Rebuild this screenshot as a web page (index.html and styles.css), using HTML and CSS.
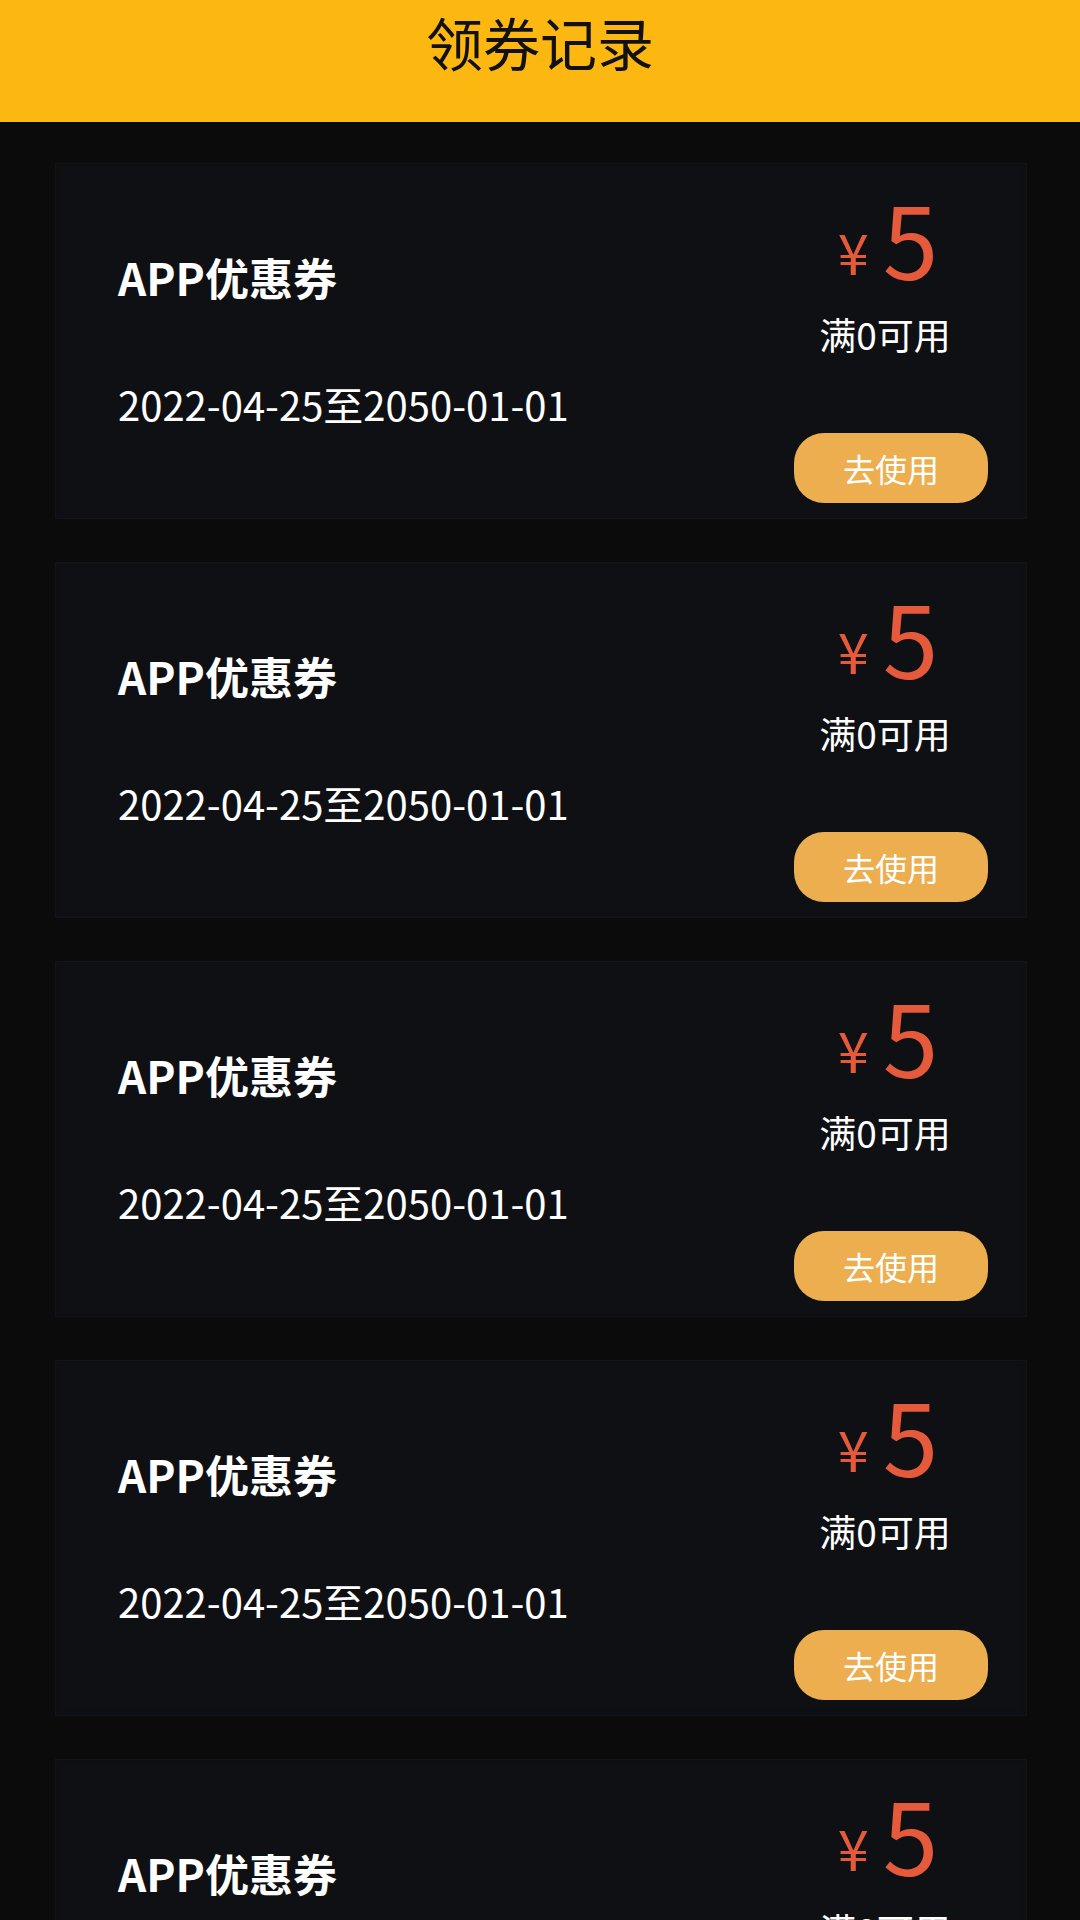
FILE: index.html
```html
<!DOCTYPE html>
<html lang="zh-CN">
<head>
<meta charset="utf-8">
<title>领券记录</title>
<link rel="stylesheet" href="styles.css">
</head>
<body>
<header class="topbar"><h1 class="topbar-title">领券记录</h1></header>
<main class="list">
  <section class="coupon">
    <div class="coupon-info">
      <div class="coupon-name">APP优惠券</div>
      <div class="coupon-date">2022-04-25至2050-01-01</div>
    </div>
    <div class="coupon-side">
      <div class="coupon-amount"><span class="yen">¥</span><span class="num">5</span></div>
      <div class="coupon-cond">满0可用</div>
      <button class="coupon-btn">去使用</button>
    </div>
  </section>
  <section class="coupon">
    <div class="coupon-info">
      <div class="coupon-name">APP优惠券</div>
      <div class="coupon-date">2022-04-25至2050-01-01</div>
    </div>
    <div class="coupon-side">
      <div class="coupon-amount"><span class="yen">¥</span><span class="num">5</span></div>
      <div class="coupon-cond">满0可用</div>
      <button class="coupon-btn">去使用</button>
    </div>
  </section>
  <section class="coupon">
    <div class="coupon-info">
      <div class="coupon-name">APP优惠券</div>
      <div class="coupon-date">2022-04-25至2050-01-01</div>
    </div>
    <div class="coupon-side">
      <div class="coupon-amount"><span class="yen">¥</span><span class="num">5</span></div>
      <div class="coupon-cond">满0可用</div>
      <button class="coupon-btn">去使用</button>
    </div>
  </section>
  <section class="coupon">
    <div class="coupon-info">
      <div class="coupon-name">APP优惠券</div>
      <div class="coupon-date">2022-04-25至2050-01-01</div>
    </div>
    <div class="coupon-side">
      <div class="coupon-amount"><span class="yen">¥</span><span class="num">5</span></div>
      <div class="coupon-cond">满0可用</div>
      <button class="coupon-btn">去使用</button>
    </div>
  </section>
  <section class="coupon">
    <div class="coupon-info">
      <div class="coupon-name">APP优惠券</div>
      <div class="coupon-date">2022-04-25至2050-01-01</div>
    </div>
    <div class="coupon-side">
      <div class="coupon-amount"><span class="yen">¥</span><span class="num">5</span></div>
      <div class="coupon-cond">满0可用</div>
      <button class="coupon-btn">去使用</button>
    </div>
  </section>
</main>
</body>
</html>
```
FILE: styles.css
```css
* { box-sizing: border-box; }
html, body {
  margin: 0;
  padding: 0;
  background: #0b0b0c;
  font-family: "Noto Sans CJK SC", "Noto Sans", sans-serif;
  height: 1920px;
  overflow: hidden;
}
.topbar {
  height: 122px;
  background: #fdb711;
  display: flex;
  justify-content: center;
  padding-top: 8px;
}
.topbar-title {
  margin: 0;
  font-size: 57px;
  font-weight: 400;
  line-height: 66px;
  color: #111;
}
.list {
  display: flex;
  flex-direction: column;
  gap: 43px;
  padding: 41px 53px 0 55px;
}
.coupon {
  height: 356px;
  flex: none;
  display: flex;
  justify-content: space-between;
  background: #0f1013;
  border: 1px solid #131417;
  box-shadow: inset 0 0 0 5px #0e0f12;
  padding: 0 38px 0 62px;
}
.coupon-info {
  padding-top: 88px;
  color: #fff;
}
.coupon-name {
  font-size: 44px;
  font-weight: 700;
  line-height: 50px;
}
.coupon-date {
  margin-top: 77px;
  font-size: 40px;
  line-height: 50px;
}
.coupon-side {
  width: 194px;
  display: flex;
  flex-direction: column;
  align-items: center;
  padding-top: 23px;
}
.coupon-amount {
  color: #e65a3c;
  line-height: 100px;
  height: 100px;
  margin-left: -6px;
  white-space: nowrap;
}
.yen {
  font-size: 56px;
  margin-right: 14px;
  vertical-align: 5px;
}
.num {
  font-size: 100px;
}
.coupon-cond {
  margin-top: 25px;
  color: #fff;
  font-size: 37px;
  line-height: 44px;
  margin-left: -12px;
}
.coupon-btn {
  margin-top: 77px;
  width: 194px;
  height: 70px;
  flex: none;
  border: none;
  border-radius: 30px;
  background: #ecae4f;
  color: #fff;
  font-family: inherit;
  font-size: 32px;
  line-height: 70px;
  padding: 0;
}
```
